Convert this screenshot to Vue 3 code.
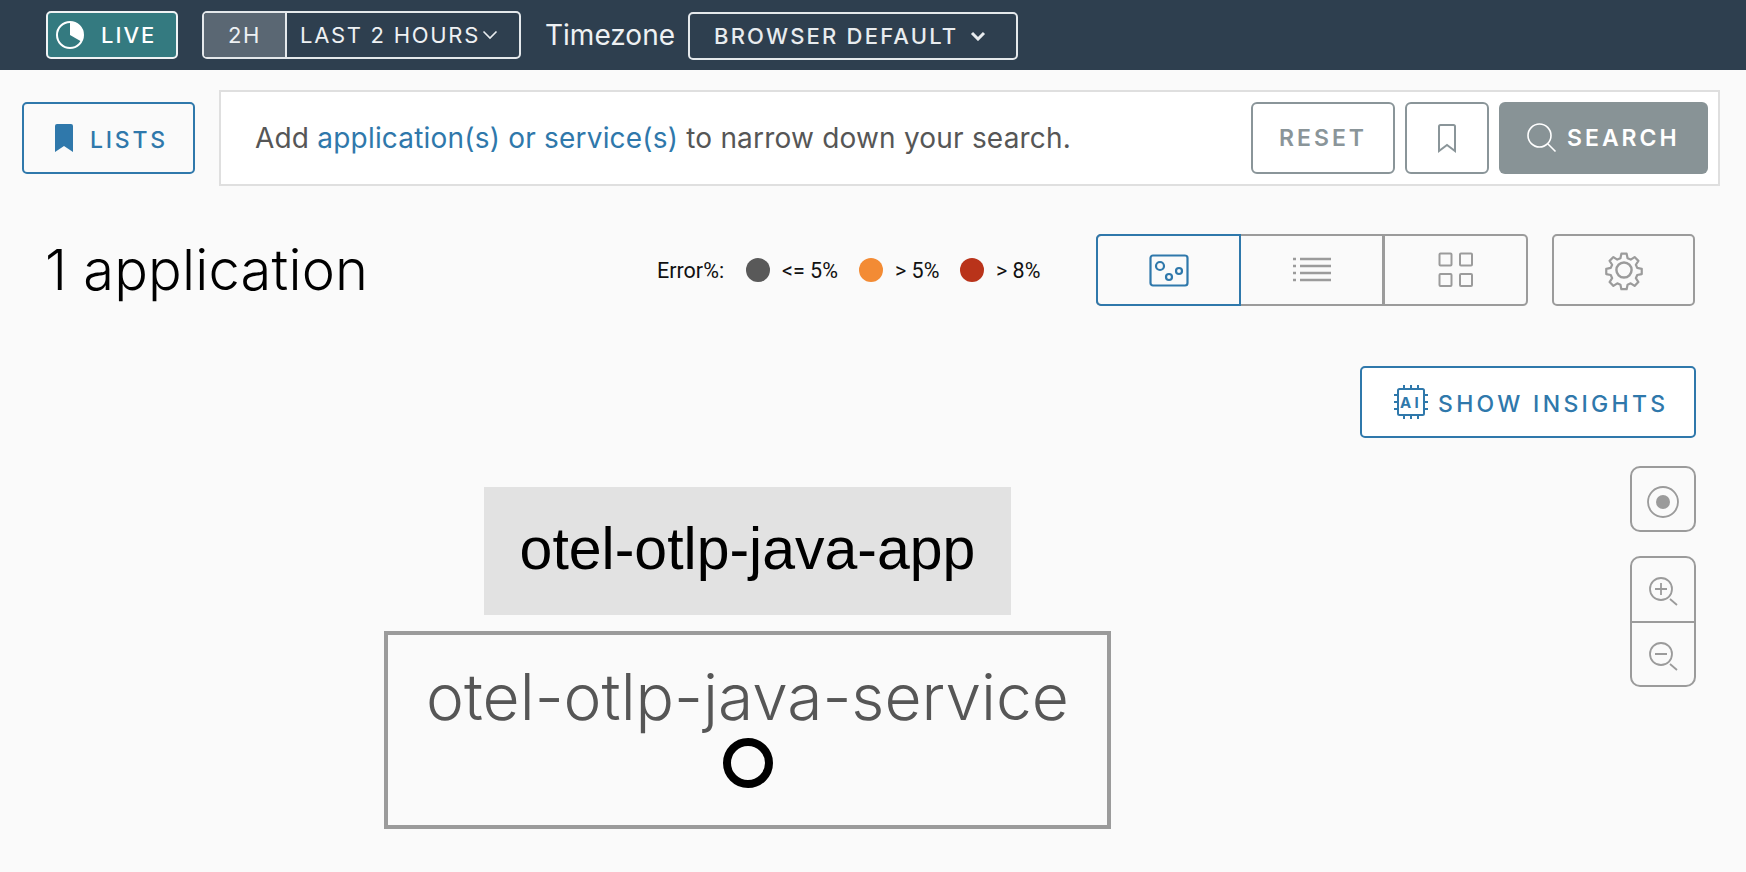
<script setup>
const legend = [
  { label: '<= 5%', color: '#595959', gap: 'l1' },
  { label: '> 5%', color: '#f38b34', gap: 'l2' },
  { label: '> 8%', color: '#b9331a', gap: 'l3' }
]
</script>

<template>
  <div class="page">
    <header class="topbar">
      <button class="live">
        <svg class="pie" width="30" height="30" viewBox="0 0 30 30">
          <circle cx="15" cy="15" r="13" fill="none" stroke="#fff" stroke-width="2" />
          <path d="M15 2a13 13 0 0 1 11.3 19.4L15 15z" fill="#fff" />
        </svg>
        <span>LIVE</span>
      </button>
      <div class="range">
        <span class="range-short">2H</span>
        <span class="range-long">
          LAST 2 HOURS
          <svg width="16" height="10" viewBox="0 0 16 10"><path d="M1.5 1.5 8 8l6.5-6.5" fill="none" stroke="#e8ecef" stroke-width="1.6" /></svg>
        </span>
      </div>
      <span class="tz-label">Timezone</span>
      <button class="tz">
        BROWSER DEFAULT
        <svg width="16" height="10" viewBox="0 0 16 10"><path d="M2 2l6 6 6-6" fill="none" stroke="#e8ecef" stroke-width="3" /></svg>
      </button>
    </header>

    <section class="search-row">
      <button class="lists">
        <svg width="18" height="28" viewBox="0 0 18 28"><path d="M2 0h14a2 2 0 0 1 2 2v26l-9-6-9 6V2a2 2 0 0 1 2-2z" fill="#2f78ab" /></svg>
        <span>LISTS</span>
      </button>
      <div class="search-box">
        <p class="hint">Add <a>application(s) or service(s)</a> to narrow down your search.</p>
        <button class="reset">RESET</button>
        <button class="save">
          <svg width="18" height="29" viewBox="0 0 18 29"><path d="M1 2.500A1.500 1.500 0 0 1 2.500 1h13A1.500 1.500 0 0 1 17 2.500V27l-8-6-8 6z" fill="none" stroke="#8a9599" stroke-width="2" /></svg>
        </button>
        <button class="search">
          <svg width="30" height="30" viewBox="0 0 30 30"><circle cx="12.500" cy="12.500" r="11.500" fill="none" stroke="#fff" stroke-width="1.600" /><path d="M21 21l7.500 7.500" stroke="#fff" stroke-width="1.600" /></svg>
          <span>SEARCH</span>
        </button>
      </div>
    </section>

    <section class="title-row">
      <h1>1 application</h1>
      <div class="legend">
        <span class="legend-title">Error%:</span>
        <span v-for="item in legend" :key="item.label" class="legend-item" :class="item.gap">
          <i :style="{ background: item.color }"></i>{{ item.label }}
        </span>
      </div>
      <div class="views">
        <button class="view active">
          <svg width="40" height="33" viewBox="0 0 40 33" fill="none" stroke="#2f78ab" stroke-width="2.200">
            <rect x="1.500" y="1.500" width="37" height="30" rx="2.500" />
            <circle cx="11" cy="12" r="4" />
            <circle cx="20" cy="23" r="3" />
            <circle cx="30" cy="17" r="3" />
          </svg>
        </button>
        <button class="view">
          <svg width="38" height="26" viewBox="0 0 38 26" stroke="#9b9b9b" stroke-width="2.500">
            <path d="M0 2h3M7 2h31M0 9h3M7 9h31M0 16h3M7 16h31M0 23h3M7 23h31" />
          </svg>
        </button>
        <button class="view">
          <svg width="36" height="36" viewBox="0 0 36 36" fill="none" stroke="#9b9b9b" stroke-width="2">
            <rect x="1.500" y="1.500" width="12" height="12" rx="1" />
            <rect x="22" y="1.500" width="12" height="12" rx="1" />
            <rect x="1.500" y="22" width="12" height="12" rx="1" />
            <rect x="22" y="22" width="12" height="12" rx="1" />
          </svg>
        </button>
      </div>
      <button class="settings">
        <svg width="42" height="42" viewBox="0 0 36 36" fill="none" stroke="#9b9b9b" stroke-width="2.100" stroke-linejoin="round">
          <circle cx="18" cy="18" r="6.500" />
          <path d="M15.500 2.500h5l.9 4.300 3 1.300 3.700-2.400 3.600 3.600-2.400 3.700 1.300 3 4.300.9v5l-4.300.9-1.300 3 2.400 3.700-3.600 3.600-3.700-2.400-3 1.300-.9 4.300h-5l-.9-4.300-3-1.300-3.700 2.400-3.600-3.600 2.400-3.700-1.300-3-4.300-.9v-5l4.300-.9 1.300-3-2.400-3.700 3.600-3.600 3.700 2.400 3-1.300z" transform="translate(1.800 1.800) scale(.9)" />
        </svg>
      </button>
    </section>

    <div class="insights-row">
      <button class="insights">
        <svg width="36" height="36" viewBox="0 0 36 36" fill="none" stroke="#2f78ab">
          <rect x="5" y="5" width="26" height="26" rx="1.500" stroke-width="2" />
          <path d="M11 1v3M18 1v3M25 1v3M11 32v3M18 32v3M25 32v3M1 11h3M1 18h3M1 25h3M32 11h3M32 18h3M32 25h3" stroke-width="2" />
          <text x="18" y="24" text-anchor="middle" class="ai">AI</text>
        </svg>
        <span>SHOW INSIGHTS</span>
      </button>
    </div>

    <main class="canvas">
      <div class="controls">
        <button class="ctrl center">
          <svg width="32" height="32" viewBox="0 0 32 32"><circle cx="16" cy="16" r="15" fill="none" stroke="#9b9b9b" stroke-width="1.800" /><circle cx="16" cy="16" r="7" fill="#9b9b9b" /></svg>
        </button>
        <div class="zoom-group">
          <button class="ctrl-z">
            <svg width="30" height="30" viewBox="0 0 30 30" fill="none" stroke="#9b9b9b" stroke-width="1.800"><circle cx="12" cy="12" r="11" /><path d="M6 12h12M12 6v12M21 22l7 6" /></svg>
          </button>
          <button class="ctrl-z">
            <svg width="30" height="30" viewBox="0 0 30 30" fill="none" stroke="#9b9b9b" stroke-width="1.800"><circle cx="12" cy="12" r="11" /><path d="M6 12h12M21 22l7 6" /></svg>
          </button>
        </div>
      </div>
      <div class="node-app">otel-otlp-java-app</div>
      <div class="node-service">
        <span class="service-name">otel-otlp-java-service</span>
        <span class="ring"></span>
      </div>
    </main>
  </div>
</template>

<style>
html, body { margin: 0; background: #fafafa; }
</style>

<style scoped>
.page {
  width: 1746px;
  height: 872px;
  overflow: hidden;
  background: #fafafa;
  font-family: "Inter", "Lato", sans-serif;
}
button {
  font-family: inherit;
  padding: 0;
  background: transparent;
  cursor: pointer;
  box-sizing: border-box;
}
.topbar {
  height: 70px;
  background: #2e3f4f;
  display: flex;
  align-items: center;
  padding-left: 46px;
  box-sizing: border-box;
  color: #eef1f3;
}
.live {
  width: 132px;
  height: 48px;
  background: #347a80;
  border: 2px solid #f0f3f5;
  border-radius: 5px;
  display: flex;
  align-items: center;
  padding-left: 7px;
  gap: 16px;
  color: #fff;
  font-size: 22px;
  font-weight: 500;
  letter-spacing: 2px;
}
.range {
  margin-left: 24px;
  width: 319px;
  height: 48px;
  border: 2px solid #e4e8eb;
  border-radius: 5px;
  box-sizing: border-box;
  display: flex;
  font-size: 22px;
  font-weight: 400;
  letter-spacing: 1.7px;
  overflow: hidden;
}
.range-short {
  width: 81px;
  background: #5a6773;
  border-right: 2px solid #e4e8eb;
  display: flex;
  align-items: center;
  justify-content: center;
}
.range-long {
  flex: 1;
  display: flex;
  align-items: center;
  padding-left: 13px;
  gap: 2px;
  white-space: nowrap;
}
.tz-label {
  margin-left: 24px;
  width: 143px;
  font-size: 28px;
  color: #eef1f3;
}
.tz {
  width: 330px;
  height: 48px;
  margin-top: 2px;
  border: 2px solid #e4e8eb;
  border-radius: 5px;
  color: #e8ecef;
  font-size: 22px;
  font-weight: 500;
  letter-spacing: 2.2px;
  display: flex;
  align-items: center;
  padding-left: 24px;
  gap: 12px;
  white-space: nowrap;
}
.search-row {
  display: flex;
  align-items: center;
  padding: 20px 0 0 22px;
  gap: 24px;
}
.lists {
  width: 173px;
  height: 72px;
  border: 2px solid #2f78ab;
  border-radius: 5px;
  color: #2f78ab;
  font-size: 23px;
  font-weight: 500;
  letter-spacing: 2.8px;
  display: flex;
  align-items: center;
  padding-left: 31px;
  gap: 17px;
}
.lists span { margin-top: 3px; }
.search-box {
  width: 1501px;
  height: 96px;
  background: #fff;
  border: 2px solid #dfdfdf;
  box-sizing: border-box;
  display: flex;
  align-items: center;
  padding: 0 10px 0 34px;
}
.hint {
  margin: 0;
  flex: 1;
  font-size: 28px;
  letter-spacing: .2px;
  color: #565656;
  white-space: nowrap;
}
.hint a { color: #2f78ab; }
.reset {
  width: 144px;
  height: 72px;
  border: 2px solid #8a9599;
  border-radius: 6px;
  color: #8a9599;
  font-size: 23px;
  font-weight: 600;
  letter-spacing: 3px;
}
.save {
  width: 84px;
  height: 72px;
  margin-left: 10px;
  border: 2px solid #8a9599;
  border-radius: 6px;
  display: flex;
  align-items: center;
  justify-content: center;
}
.search {
  width: 209px;
  height: 72px;
  margin-left: 10px;
  background: #889396;
  border: 0;
  border-radius: 6px;
  color: #fff;
  font-size: 23px;
  font-weight: 600;
  letter-spacing: 3px;
  display: flex;
  align-items: center;
  padding-left: 28px;
  gap: 10px;
}
.title-row {
  display: flex;
  align-items: center;
  height: 72px;
  margin-top: 48px;
  padding-left: 45px;
  position: relative;
}
h1 {
  margin: 0;
  width: 611px;
  font-size: 56px;
  font-weight: 300;
  letter-spacing: .2px;
  color: #000;
  white-space: nowrap;
}
.legend {
  width: 440px;
  display: flex;
  align-items: center;
  font-family: "Roboto", sans-serif;
  font-size: 21.5px;
  color: #111;
}
.legend-title { width: 89px; margin-left: 1px; }
.legend-item {
  display: flex;
  align-items: center;
  gap: 12px;
}
.l1 { width: 113px; }
.l2 { width: 101px; }
.legend-item i {
  width: 24px;
  height: 24px;
  border-radius: 50%;
  display: block;
}
.views {
  width: 432px;
  height: 72px;
  display: flex;
  border: 2px solid #9b9b9b;
  border-radius: 5px;
  box-sizing: border-box;
}
.view {
  flex: 1;
  border: 0;
  border-right: 3px solid #9b9b9b;
  display: flex;
  align-items: center;
  justify-content: center;
}
.view:last-child { border-right: 0; }
.view.active {
  margin: -2px 0 -2px -2px;
  border: 2px solid #2f78ab;
  border-radius: 5px 0 0 5px;
  flex: 0 0 145px;
}
.settings {
  width: 143px;
  height: 72px;
  margin-left: 24px;
  border: 2px solid #9b9b9b;
  border-radius: 5px;
  display: flex;
  align-items: center;
  justify-content: center;
}
.insights-row {
  display: flex;
  justify-content: flex-end;
  padding-right: 50px;
  margin-top: 60px;
}
.insights {
  width: 336px;
  height: 72px;
  background: #fff;
  border: 2px solid #2f78ab;
  border-radius: 5px;
  color: #2f78ab;
  font-size: 23px;
  font-weight: 500;
  letter-spacing: 3.3px;
  display: flex;
  align-items: center;
  padding-left: 31px;
  gap: 9px;
}
.insights span { margin-top: 3px; }
.ai {
  font-family: "Inter", sans-serif;
  font-size: 15px;
  font-weight: 700;
  fill: #2f78ab;
  stroke: none;
}
.canvas {
  position: relative;
  height: 434px;
}
.controls {
  position: absolute;
  right: 50px;
  top: 28px;
  width: 66px;
  display: flex;
  flex-direction: column;
  gap: 24px;
}
.ctrl {
  height: 66px;
  padding-top: 6px;
  border: 2px solid #9b9b9b;
  border-radius: 10px;
  display: flex;
  align-items: center;
  justify-content: center;
}
.zoom-group {
  border: 2px solid #9b9b9b;
  border-radius: 10px;
  display: flex;
  flex-direction: column;
  box-sizing: border-box;
  height: 131px;
}
.ctrl-z {
  flex: 1;
  border: 0;
  display: flex;
  align-items: center;
  justify-content: center;
  padding: 6px 0 0 2px;
}
.ctrl-z + .ctrl-z { border-top: 2px solid #9b9b9b; }
.node-app {
  position: absolute;
  left: 484px;
  top: 49px;
  width: 527px;
  height: 124px;
  padding-bottom: 4px;
  background: #e2e2e2;
  color: #000;
  font-family: "Liberation Sans", sans-serif;
  font-size: 59px;
  display: flex;
  align-items: center;
  justify-content: center;
}
.node-service {
  position: absolute;
  left: 384px;
  top: 193px;
  width: 727px;
  height: 198px;
  border: 4px solid #9b9b9b;
  box-sizing: border-box;
  display: flex;
  flex-direction: column;
  align-items: center;
  color: #565656;
}
.service-name {
  font-size: 64px;
  font-weight: 300;
  line-height: 80px;
  margin-top: 22px;
  white-space: nowrap;
}
.ring {
  width: 50px;
  height: 50px;
  border: 8px solid #000;
  border-radius: 50%;
  box-sizing: border-box;
  margin-top: 1px;
}
</style>
